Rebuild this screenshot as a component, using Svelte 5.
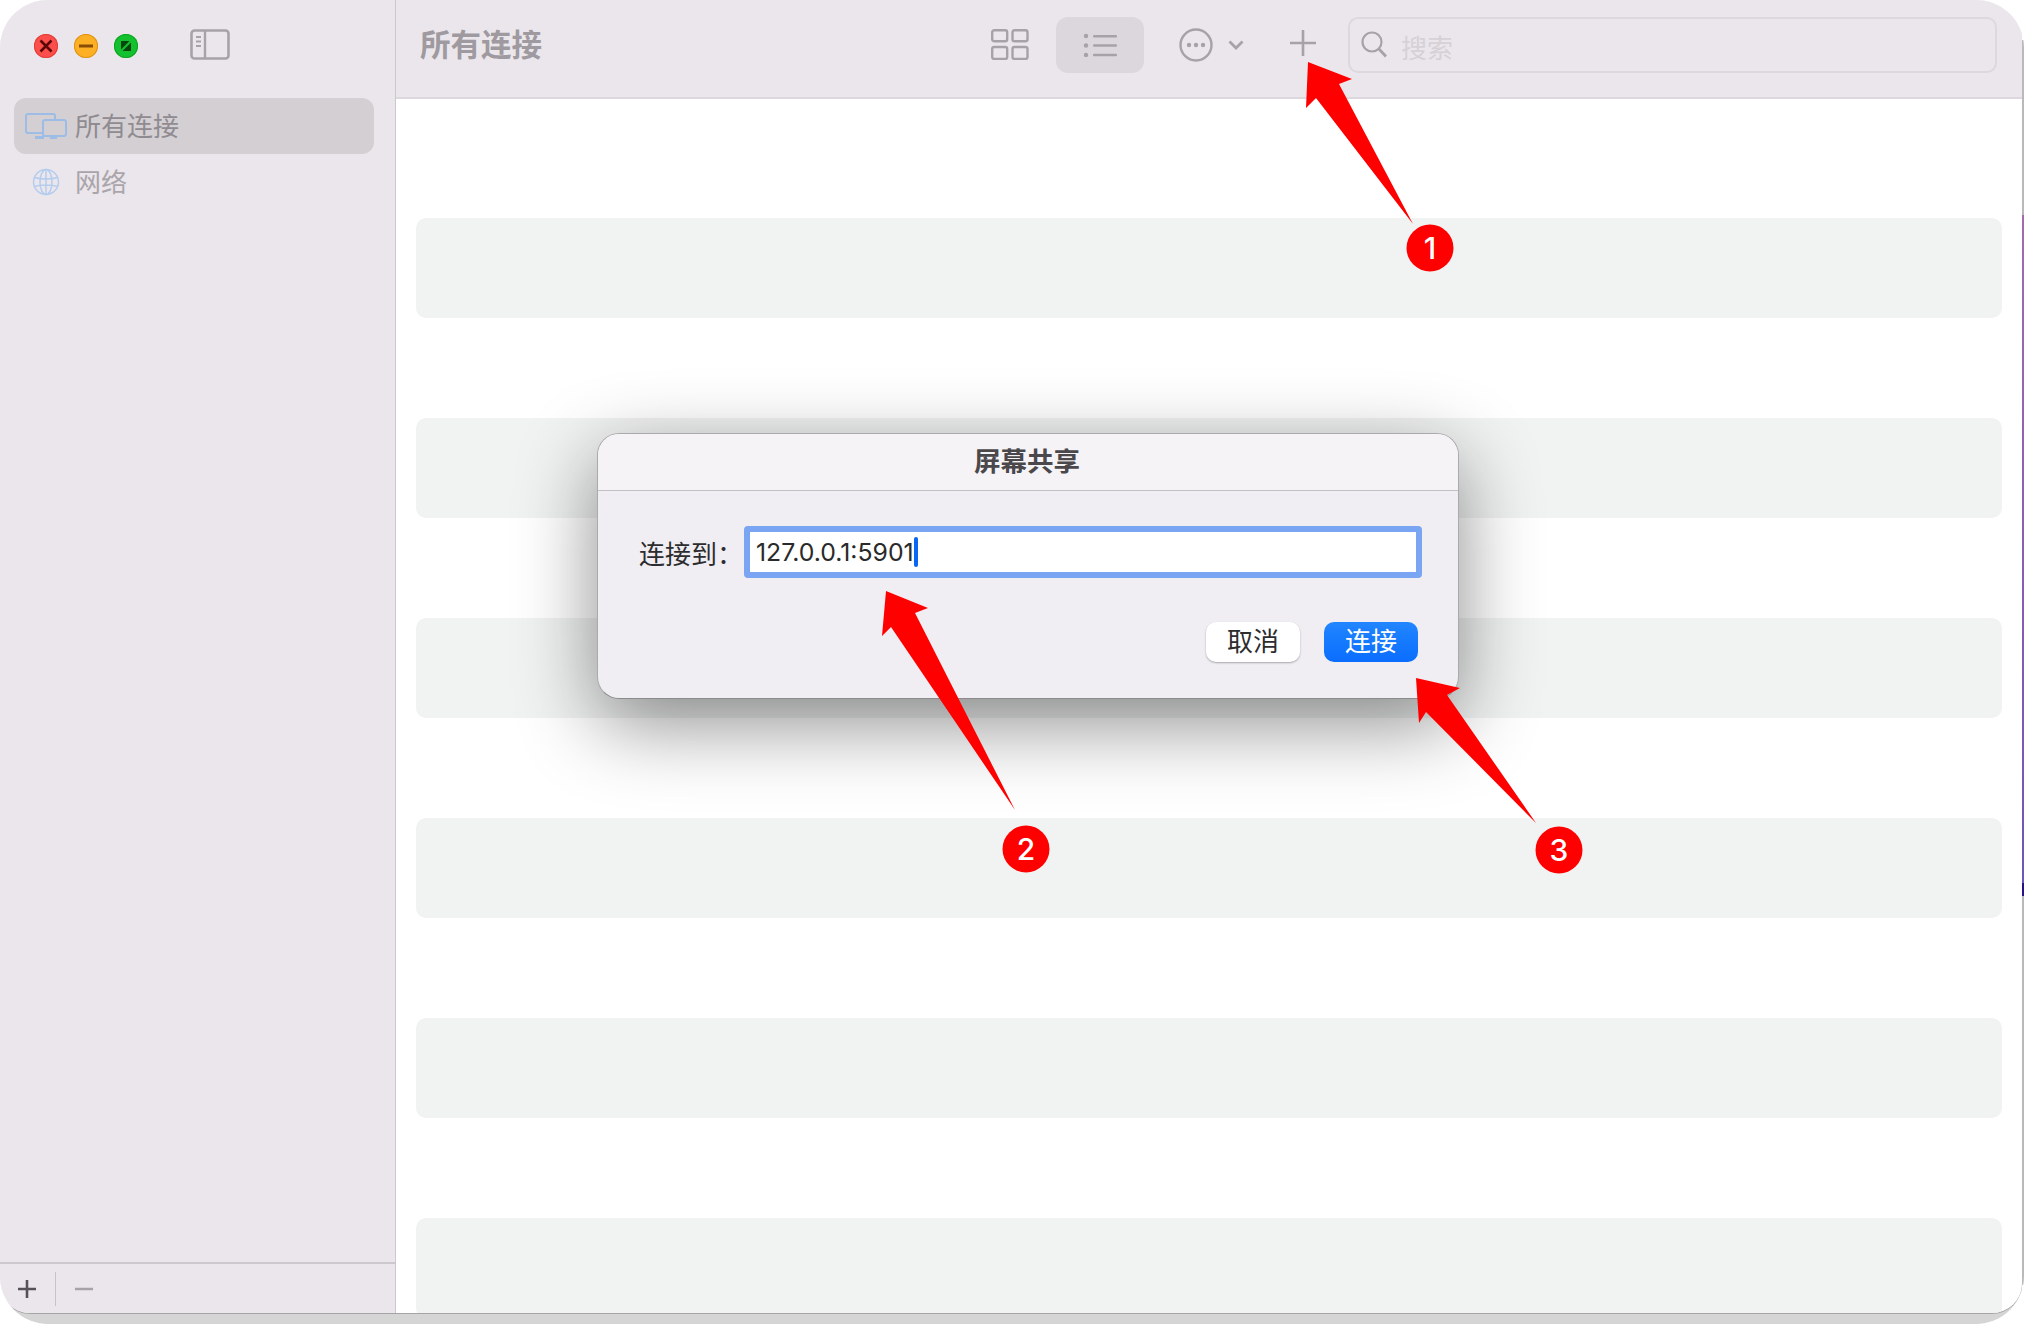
<script>
	const rows = [0, 1, 2, 3, 4, 5];

	// annotation arrows, in page coordinates
	const arrows = [
		"1308,62 1352,79 1339,84 1413,224 1316,98 1306,108",
		"886,591 928,608 915,613 1015,810 891,627 882,636",
		"1416,678 1460,688 1447,695 1536,823 1426,712 1419,723"
	];
	const badges = [
		{ n: 1, x: 1430, y: 248 },
		{ n: 2, x: 1026, y: 849 },
		{ n: 3, x: 1559, y: 850 }
	];
</script>

<div class="screen">
	<div class="app">
		<aside class="sidebar">
			<div class="titlebar">
				<div class="lights">
					<span class="light red">
						<svg viewBox="0 0 24 24" width="24" height="24"><path d="M6.5 6.5l11 11M17.5 6.5l-11 11" stroke="#5c0705" stroke-width="2.6" fill="none" /></svg>
					</span>
					<span class="light yellow">
						<svg viewBox="0 0 24 24" width="24" height="24"><path d="M5 12h14" stroke="#8a4d08" stroke-width="3" fill="none" /></svg>
					</span>
					<span class="light green">
						<svg viewBox="0 0 24 24" width="24" height="24"><path d="M7 7h8.500L7 15.500zM17 8.500V17H8.500z" fill="#04460c" /></svg>
					</span>
				</div>
				<svg class="toggle" viewBox="0 0 40 31" width="40" height="31" fill="none" stroke="#a6a2a7">
					<rect x="1.500" y="1.500" width="37" height="28" rx="3" stroke-width="2.600" />
					<path d="M15 2v27" stroke-width="2.400" />
					<path d="M6 8h5M6 12.500h5M6 17h5" stroke-width="1.800" />
				</svg>
			</div>

			<nav class="nav">
				<div class="item active">
					<svg class="item-icon" viewBox="0 0 42 26" width="42" height="26" fill="none" stroke="#9dbce6" stroke-width="2">
						<rect x="1" y="1" width="29" height="19" rx="2" />
						<rect x="18" y="7" width="23" height="16" rx="2" fill="#d4cfd3" />
						<path d="M10 23h9v3h-9zM25 23.500h7V26h-7z" fill="#9dbce6" stroke="none" />
					</svg>
					<span>所有连接</span>
				</div>
				<div class="item">
					<svg class="item-icon" viewBox="0 0 42 28" width="42" height="28" fill="none" stroke="#b4cdee" stroke-width="1.500">
						<circle cx="21" cy="14" r="12.500" />
						<ellipse cx="21" cy="14" rx="6" ry="12.500" />
						<path d="M9.500 9.500c6 2 17 2 23 0M9.500 18.500c6-2 17-2 23 0M21 1.500v25" />
					</svg>
					<span class="dim">网络</span>
				</div>
			</nav>

			<div class="sidebar-foot">
				<svg viewBox="0 0 20 20" width="20" height="20"><path d="M10 1v18M1 10h18" stroke="#55505a" stroke-width="2.600" fill="none" /></svg>
				<i class="foot-sep"></i>
				<svg viewBox="0 0 20 20" width="20" height="20"><path d="M1 10h18" stroke="#a6a2a7" stroke-width="2.600" fill="none" /></svg>
			</div>
		</aside>

		<main class="main">
			<header class="toolbar">
				<h1>所有连接</h1>
				<div class="tools">
					<svg class="tool-grid" viewBox="0 0 38 31" width="38" height="31" fill="none" stroke="#a6a2a7" stroke-width="2.400">
						<rect x="1.200" y="1.200" width="15" height="11" rx="2" />
						<rect x="21.500" y="1.200" width="15" height="11" rx="2" />
						<rect x="1.200" y="18" width="15" height="12" rx="2" />
						<rect x="21.500" y="18" width="15" height="12" rx="2" />
					</svg>
					<div class="tool-list">
						<svg viewBox="0 0 36 24" width="36" height="24" fill="#a6a2a7">
							<circle cx="4" cy="3" r="2.200" /><circle cx="4" cy="12.500" r="2.200" /><circle cx="4" cy="22" r="2.200" />
							<rect x="11" y="2" width="24" height="2.400" rx="1" /><rect x="11" y="11.300" width="24" height="2.400" rx="1" /><rect x="11" y="20.800" width="24" height="2.400" rx="1" />
						</svg>
					</div>
					<svg class="tool-more" viewBox="0 0 34 34" width="34" height="34" fill="none" stroke="#a6a2a7" stroke-width="2.400">
						<circle cx="17" cy="17" r="15.500" />
						<g fill="#a6a2a7" stroke="none"><circle cx="10" cy="17" r="2.200" /><circle cx="17" cy="17" r="2.200" /><circle cx="24" cy="17" r="2.200" /></g>
					</svg>
					<svg class="tool-chevron" viewBox="0 0 16 10" width="16" height="10"><path d="M1.500 1.500L8 8l6.500-6.500" stroke="#a6a2a7" stroke-width="2.800" fill="none" /></svg>
					<svg class="tool-plus" viewBox="0 0 28 28" width="28" height="28"><path d="M14 1v26M1 14h26" stroke="#a6a2a7" stroke-width="2.600" fill="none" /></svg>
					<div class="search">
						<svg viewBox="0 0 26 28" width="26" height="28" fill="none" stroke="#a6a2a7" stroke-width="2.200">
							<circle cx="11" cy="11" r="9.500" /><path d="M18 18l7 7.500" stroke-width="2.800" />
						</svg>
						<span>搜索</span>
					</div>
				</div>
			</header>

			<div class="list">
				{#each rows as row (row)}
					<div class="row"></div>
				{/each}
			</div>
		</main>
	</div>

	<div class="edge"></div>

	<div class="dialog">
		<div class="dialog-title">屏幕共享</div>
		<div class="dialog-body">
			<div class="field">
				<label for="addr">连接到：</label>
				<div class="input" id="addr">127.0.0.1:5901<i class="caret"></i></div>
			</div>
			<div class="actions">
				<button class="btn">取消</button>
				<button class="btn primary">连接</button>
			</div>
		</div>
	</div>

	<svg class="marks" viewBox="0 0 2024 1324" width="2024" height="1324">
		{#each arrows as pts}
			<polygon points={pts} fill="#ff0000" />
		{/each}
		{#each badges as b (b.n)}
			<circle cx={b.x} cy={b.y} r="23.500" fill="#ff0000" />
			<text x={b.x} y={b.y + 11} text-anchor="middle">{b.n}</text>
		{/each}
	</svg>
</div>

<style>
	:global(body) {
		background: #fff;
	}

	.screen {
		position: relative;
		display: flex;
		width: 2024px;
		height: 1324px;
		overflow: hidden;
		border-radius: 48px;
		background: linear-gradient(to right, #d5d5d5 2022px, #fff 2022px);
		font-family: "Noto Sans CJK SC", sans-serif;
	}

	.app {
		display: grid;
		grid-template-columns: 396px 1fr;
		flex: 1;
		height: 1313px;
		background: #fff;
		border-bottom: 1px solid #a5a5a5;
		border-bottom-left-radius: 30px;
		border-bottom-right-radius: 30px;
		overflow: hidden;
	}

	.edge {
		width: 2px;
		height: 100%;
		background: linear-gradient(#fff 0, #fff 40px, #b9b9b9 40px, #b9b9b9 215px, #a26bae 215px, #6f55b5 883px, #2c0d8c 883px, #2c0d8c 896px, #b9b9b9 896px, #b9b9b9 1285px, #fff 1285px);
	}

	.sidebar {
		display: flex;
		flex-direction: column;
		background: #ebe6ec;
		border-right: 1px solid #cbc7cc;
	}

	.titlebar {
		display: flex;
		align-items: center;
		height: 98px;
		padding: 0 0 6px 34px;
		box-sizing: border-box;
	}

	.lights {
		display: flex;
		gap: 16px;
		margin-right: 52px;
	}

	.light {
		display: block;
		width: 24px;
		height: 24px;
		border-radius: 50%;
		box-sizing: border-box;
	}

	.light svg {
		display: block;
	}

	.red {
		background: #fc4f4b;
		box-shadow: inset 0 0 0 1px #df3f38;
	}

	.yellow {
		background: #fdb024;
		box-shadow: inset 0 0 0 1px #dd9318;
	}

	.green {
		background: #13c02d;
		box-shadow: inset 0 0 0 1px #0fa423;
	}

	.toggle {
		margin-top: -4px;
	}

	.nav {
		display: flex;
		flex-direction: column;
		flex: 1;
		padding: 0 21px 0 14px;
	}

	.item {
		display: flex;
		align-items: center;
		gap: 8px;
		height: 56px;
		padding-left: 11px;
		border-radius: 12px;
		font-size: 26px;
		line-height: 52px;
		color: #9b979c;
	}

	.item span {
		margin-top: -2px;
	}

	.item-icon {
		flex: none;
	}

	.active {
		background: #d4cfd3;
		color: #8f8b90;
	}

	.item .dim {
		color: #a9a5aa;
	}

	.sidebar-foot {
		display: flex;
		align-items: center;
		height: 49px;
		padding: 0 0 0 17px;
		border-top: 2px solid #cdc8ce;
	}

	.foot-sep {
		width: 1px;
		height: 34px;
		margin: 0 18px 0 18px;
		background: #c8c3c9;
	}

	.main {
		display: flex;
		flex-direction: column;
		min-width: 0;
		overflow: hidden;
	}

	.toolbar {
		display: flex;
		align-items: center;
		justify-content: space-between;
		flex: none;
		height: 99px;
		padding: 0 25px 8px 24px;
		background: #ebe6ec;
		border-bottom: 2px solid #dcd8dd;
		box-sizing: border-box;
	}

	h1 {
		margin: -3px 0 0;
		font-size: 30.500px;
		font-weight: 700;
		color: #9e9a9f;
	}

	.tools {
		display: flex;
		align-items: center;
	}

	.tool-grid {
		margin-right: 27px;
	}

	.tool-list {
		display: flex;
		align-items: center;
		justify-content: center;
		width: 88px;
		height: 56px;
		border-radius: 12px;
		background: #dcd7dd;
	}

	.tool-more {
		margin-left: 35px;
	}

	.tool-chevron {
		margin-left: 15px;
	}

	.tool-plus {
		margin: -4px 0 0 45px;
	}

	.search {
		display: flex;
		align-items: center;
		gap: 14px;
		width: 649px;
		height: 56px;
		margin-left: 31px;
		padding-left: 11px;
		border: 2px solid #dcd8dd;
		border-radius: 10px;
		box-sizing: border-box;
		font-size: 26px;
		color: #d5d1d6;
	}

	.search span {
		margin-top: 4px;
	}

	.list {
		display: flex;
		flex-direction: column;
		gap: 100px;
		flex: 1;
		min-height: 0;
		overflow: hidden;
		padding: 119px 20px 0 20px;
	}

	.row {
		flex: none;
		height: 100px;
		border-radius: 10px;
		background: #f1f3f2;
	}

	.dialog {
		position: absolute;
		left: 597px;
		top: 433px;
		width: 862px;
		height: 266px;
		box-sizing: border-box;
		display: flex;
		flex-direction: column;
		border: 1px solid #aaa9ab;
		border-bottom-color: #8b8a8c;
		border-radius: 22px;
		overflow: hidden;
		background: #f0eef2;
		box-shadow: 0 24px 80px rgba(0, 0, 0, 0.45);
	}

	.dialog-title {
		height: 57px;
		line-height: 52px;
		flex: none;
		padding-right: 2px;
		text-align: center;
		font-size: 26.500px;
		font-weight: 700;
		color: #4a484b;
		background: #f6f3f7;
		border-bottom: 1px solid #c2c0c4;
		box-sizing: border-box;
	}

	.dialog-body {
		display: flex;
		flex-direction: column;
		flex: 1;
		padding: 35px 36px 0 41px;
	}

	.field {
		display: flex;
		align-items: center;
		gap: 15px;
	}

	label {
		width: 90px;
		font-size: 26px;
		color: #2d2c2e;
		white-space: nowrap;
	}

	.input {
		display: flex;
		align-items: center;
		flex: 1;
		height: 52px;
		padding-left: 6px;
		border: 6px solid #7aa5f2;
		border-radius: 4px;
		background: #fff;
		box-sizing: border-box;
		font-family: "Inter", "Liberation Sans", sans-serif;
		font-size: 24.800px;
		color: #2a2a2a;
	}

	.caret {
		width: 4px;
		height: 30px;
		margin-left: 0;
		border-radius: 2px;
		background: #0b66f5;
	}

	.actions {
		display: flex;
		justify-content: flex-end;
		gap: 24px;
		margin-top: 44px;
		padding-right: 4px;
	}

	.btn {
		width: 94px;
		height: 40px;
		padding: 0 0 5px;
		border: 0;
		border-radius: 10px;
		background: #fff;
		box-shadow: 0 1px 2px rgba(0, 0, 0, 0.3);
		font-family: inherit;
		font-size: 26px;
		line-height: 36px;
		color: #2d2c2e;
	}

	.primary {
		background: linear-gradient(#2186ff, #0a6dff);
		color: #fff;
		box-shadow: none;
	}

	.marks {
		position: absolute;
		left: 0;
		top: 0;
		pointer-events: none;
	}

	.marks text {
		font-family: "Inter", "Liberation Sans", sans-serif;
		font-size: 30px;
		font-weight: 500;
		fill: #fff;
	}
</style>
